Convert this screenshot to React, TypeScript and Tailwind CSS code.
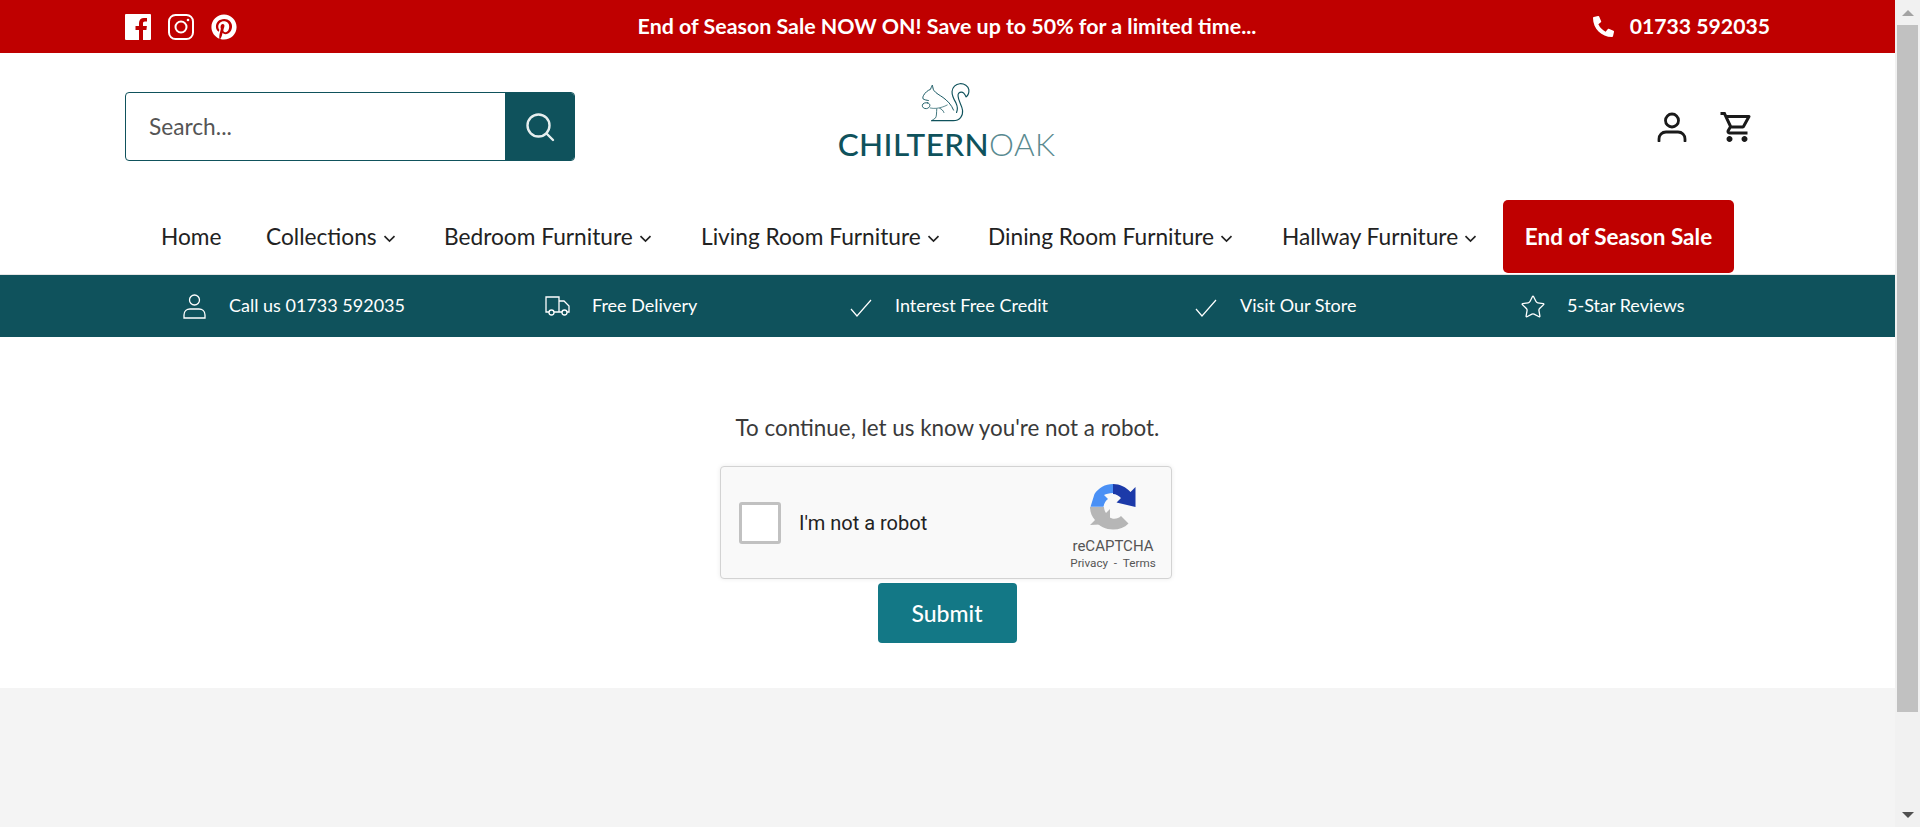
import { FaPinterest, FaPhoneAlt } from 'react-icons/fa';
import { MdOutlineShoppingCart } from 'react-icons/md';
import { Star } from 'lucide-react';

const lato = { fontFamily: 'Lato, sans-serif' };

function Chevron() {
  return (
    <svg width="13" height="8" viewBox="0 0 13 8" fill="none" stroke="currentColor" strokeWidth="1.7" className="ml-[6px] mt-[3px]">
      <path d="M1.5 1.2 6.5 6 11.5 1.2" />
    </svg>
  );
}

function Squirrel() {
  return (
    <svg viewBox="355 65 175 140" width="59" height="47" fill="none" stroke="#0f525c" strokeWidth="3.8" strokeLinecap="round" strokeLinejoin="round">
      {/* tail and base */}
      <path d="M393 197h72c22 0 33-16 31-34-2-18-14-30-15-48-1-8 4-13 11-13 7 0 11 5 16 16 6-5 10-14 9-24-2-12-15-21-30-20-14 1-25 12-26 26-1 14 6 26 13 38 5 10 6 22 2 32" />
      {/* head */}
      <path d="M395 80c-3 4-4 9-6 13-9 3-18 11-23 20-2 4-3 8-2 11 5 4 12 5 18 6" strokeWidth="3.2" />
      {/* back */}
      <path d="M395 80c3 5 2 12 5 16 8 11 20 16 31 24 14 10 28 24 35 42" strokeWidth="3.2" />
      {/* acorn */}
      <path d="M380 138c-9-2-17 1-18 8-1 7 6 12 14 11 6-1 10-5 11-10 1-4-3-8-7-9z" strokeWidth="3" />
      {/* arm */}
      <path d="M388 155c14 3 28 1 40-3 6-2 12-4 17-7" strokeWidth="2.2" />
      {/* haunch */}
      <path d="M410 158c-1 12 0 24-4 30-3 4-9 5-13 9M420 156c6 2 12 8 14 14" strokeWidth="2.6" />
    </svg>
  );
}

function RecaptchaLogo() {
  return (
    <svg viewBox="0 0 46 46" width="46" height="46">
      {/* blue arrow */}
      <path d="M23 0C15 0 8.500 4 4.500 10L.5 22.800H13.500C14 19 16 16.500 18 15l-4-4c2-1 5-2 9-2z" fill="#4a90f5" />
      {/* navy arrow */}
      <path d="M23 0v10c3 0 6 2 8 4l-4.500 4.500 19 4.500V3l-5 5C36 3 30 0 23 0z" fill="#1c3aa9" />
      {/* grey arrow */}
      <path d="M0 23h14c0 1 .5 4 2 6l4-4v15l-20 1 5-5c-3-3-5-8-5-13z" fill="#b6b6b6" />
      <path d="M19 33c4 3 9 2 12-1l7.500 7.500c-4 4-9 6-15.500 6-7 0-14-3-18-9z" fill="#b6b6b6" />
      <path d="M31 32l6-9h-5l-1.500 5z" fill="#f9f9f9" />
    </svg>
  );
}

const navItems = [
  { label: 'Home', caret: false, w: 'w-[105px]' },
  { label: 'Collections', caret: true, w: 'w-[178px]' },
  { label: 'Bedroom Furniture', caret: true, w: 'w-[257px]' },
  { label: 'Living Room Furniture', caret: true, w: 'w-[287px]' },
  { label: 'Dining Room Furniture', caret: true, w: 'w-[294px]' },
  { label: 'Hallway Furniture', caret: true, w: 'w-[221px]' },
];

export default function App() {
  return (
    <div className="flex h-screen overflow-hidden bg-white" style={lato}>
      <div className="flex-1 flex flex-col min-w-0">
        {/* Announcement bar */}
        <div className="h-[53px] bg-[#bf0000] text-white flex items-center pl-[125px] pr-[125px] shrink-0">
          <div className="flex items-center gap-[17px] w-[457px] shrink-0">
            <svg width="26" height="26" viewBox="0 0 26 26" fill="#fff">
              <path d="M1 0h24a1 1 0 0 1 1 1v24a1 1 0 0 1-1 1h-7V16h3.400l.5-4h-3.900V9.500c0-1.100.3-1.900 2-1.900h2V4.100c-.4 0-1.600-.2-3-.2-3 0-5 1.800-5 5.200V12h-3.500v4H14v10H1a1 1 0 0 1-1-1V1a1 1 0 0 1 1-1z" />
            </svg>
            <svg width="26" height="26" viewBox="0 0 26 26" fill="none" stroke="#fff" strokeWidth="2">
              <rect x="1" y="1" width="24" height="24" rx="6.500" />
              <circle cx="13" cy="13" r="5.500" />
              <circle cx="20" cy="6" r="1.300" fill="#fff" stroke="none" />
            </svg>
            <FaPinterest size={26} />
          </div>
          <div className="w-[700px] shrink-0 ml-[15px] text-center text-[21.4px] font-bold whitespace-nowrap">End of Season Sale NOW ON! Save up to 50% for a limited time...</div>
          <div className="ml-auto flex items-center gap-[16px] text-[21.2px] font-bold">
            <FaPhoneAlt size={21} />
            <span>01733 592035</span>
          </div>
        </div>

        {/* Search, logo, account */}
        <div className="grid grid-cols-[1fr_auto_1fr] items-start pt-[39px] pb-[39px] pl-[125px] pr-[140px] shrink-0">
          <div className="flex w-[450px] h-[69px] rounded-[4px] border border-[#0f525c] overflow-hidden">
            <div className="flex-1 flex items-center pl-[23px] pt-[1px] text-[22.7px] text-[#555]">Search...</div>
            <div className="w-[69px] bg-[#0f525c] flex items-center justify-center">
              <svg width="30" height="30" viewBox="0 0 30 30" fill="none" stroke="#e6eeee" strokeWidth="2.400" strokeLinecap="round">
                <circle cx="13.500" cy="13.500" r="11" />
                <path d="M21.500 21.500 28 28" />
              </svg>
            </div>
          </div>
          <div className="flex flex-col items-center mt-[-11px] ml-[13px] h-[80px]">
            <Squirrel />
            <div className="text-[31.5px] leading-[34px] text-[#0f525c] tracking-[0.4px] mt-[4px]" style={lato}>
              <span className="font-medium">CHILTERN</span>
              <span className="font-light text-[#5a8a90]">OAK</span>
            </div>
          </div>
          <div className="flex justify-end items-center gap-[32px] h-[69px] text-[#1a1a1a]">
            <svg width="30" height="30" viewBox="0 0 30 30" fill="none" stroke="currentColor" strokeWidth="2.800" strokeLinecap="round">
              <circle cx="15" cy="8.500" r="6.500" />
              <path d="M2 29v-2c0-4 3-7 7-7h12c4 0 7 3 7 7v2" />
            </svg>
            <MdOutlineShoppingCart size={36} />
          </div>
        </div>

        {/* Main nav */}
        <div className="h-[75px] shrink-0 border-b border-[#e6e6e6] flex items-start pl-[161px] text-[22.7px] text-[#222]">
          {navItems.map(item => (
            <div key={item.label} className={`${item.w} h-[73px] pt-[1px] flex items-center shrink-0`}>
              <span className="whitespace-nowrap">{item.label}</span>
              {item.caret && <Chevron />}
            </div>
          ))}
          <div className="w-[231px] h-[73px] rounded-[5px] bg-[#bf0000] text-white font-bold flex items-center justify-center text-[22.5px]">End of Season Sale</div>
        </div>

        {/* USP band */}
        <div className="h-[62px] bg-[#0f525c] text-white shrink-0 grid grid-cols-[362px_305px_345px_325px_1fr] pl-[183px] items-center text-[18px] leading-[24px]">
          <div className="flex items-center gap-[23px]">
            <svg width="23" height="25" viewBox="0 0 23 25" fill="none" stroke="#fff" strokeWidth="1.300" className="mt-[1px]">
              <circle cx="11.500" cy="6" r="5" />
              <path d="M1 24v-3c0-4 3-6 6-6h9c3 0 6 2 6 6v3z" />
            </svg>
            <span className="mt-[-2px]">Call us 01733 592035</span>
          </div>
          <div className="flex items-center gap-[22px]">
            <svg width="25" height="20" viewBox="0 0 25 20" fill="none" stroke="#fff" strokeWidth="1.300">
              <path d="M4 16H1V1h13v15H9M14 5h5l5 5v6h-2M17 16h-3" />
              <circle cx="6.500" cy="16.500" r="2.500" />
              <circle cx="19.500" cy="16.500" r="2.500" />
            </svg>
            <span className="mt-[-2px]">Free Delivery</span>
          </div>
          <div className="flex items-center gap-[23px]">
            <svg width="22" height="18" viewBox="0 0 22 18" fill="none" stroke="#fff" strokeWidth="1.200" className="mt-[3px]">
              <path d="M1 10l6 7L21 1" />
            </svg>
            <span className="mt-[-2px]">Interest Free Credit</span>
          </div>
          <div className="flex items-center gap-[23px]">
            <svg width="22" height="18" viewBox="0 0 22 18" fill="none" stroke="#fff" strokeWidth="1.200" className="mt-[3px]">
              <path d="M1 10l6 7L21 1" />
            </svg>
            <span className="mt-[-2px]">Visit Our Store</span>
          </div>
          <div className="flex items-center gap-[21px]">
            <Star size={26} strokeWidth={1.2} className="mt-[2px]" />
            <span className="mt-[-2px]">5-Star Reviews</span>
          </div>
        </div>

        {/* Captcha challenge */}
        <div className="h-[351px] shrink-0 flex flex-col items-center pt-[76px]">
          <p className="text-[22.4px] leading-[30px] text-[#3a3a3a] whitespace-nowrap">To continue, let us know you're not a robot.</p>
          <div className="mt-[23px] w-[452px] h-[113px] bg-[#f9f9f9] border border-[#d3d3d3] rounded-[4px] shadow-[0_0_5px_rgba(0,0,0,0.08)] flex items-center pl-[18px] ml-[-3px] relative" style={{ fontFamily: 'Roboto, sans-serif' }}>
            <div className="w-[42px] h-[42px] bg-white border-[3px] border-[#c1c1c1] rounded-[3px]" />
            <span className="ml-[18px] text-[20px] text-[#222]">I'm not a robot</span>
            <div className="ml-auto mr-[13px] w-[90px] flex flex-col items-center pt-[8px]">
              <RecaptchaLogo />
              <span className="text-[15px] leading-[18px] mt-[7px] text-[#555]">reCAPTCHA</span>
              <span className="text-[11.7px] leading-[14px] mt-[1px] text-[#555] whitespace-nowrap">Privacy&nbsp;&nbsp;-&nbsp;&nbsp;Terms</span>
            </div>
          </div>
          <button className="mt-[4px] w-[139px] h-[60px] bg-[#137886] text-white rounded-[4px] text-[23px] font-medium ml-[-1px]" style={lato}>Submit</button>
        </div>

        <div className="flex-1 bg-[#f4f4f4]" />
      </div>

      {/* Scrollbar */}
      <div className="w-[25px] shrink-0 bg-[#f1f1f1] flex flex-col items-center relative">
        <div className="h-[25px] flex items-center justify-center">
          <div className="w-0 h-0 border-x-[6px] border-x-transparent border-b-[6px] border-b-[#a3a3a3]" />
        </div>
        <div className="w-[21px] h-[687px] bg-[#c1c1c1]" />
        <div className="mt-auto h-[25px] flex items-center justify-center">
          <div className="w-0 h-0 border-x-[6px] border-x-transparent border-t-[6px] border-t-[#505050]" />
        </div>
      </div>
    </div>
  );
}
